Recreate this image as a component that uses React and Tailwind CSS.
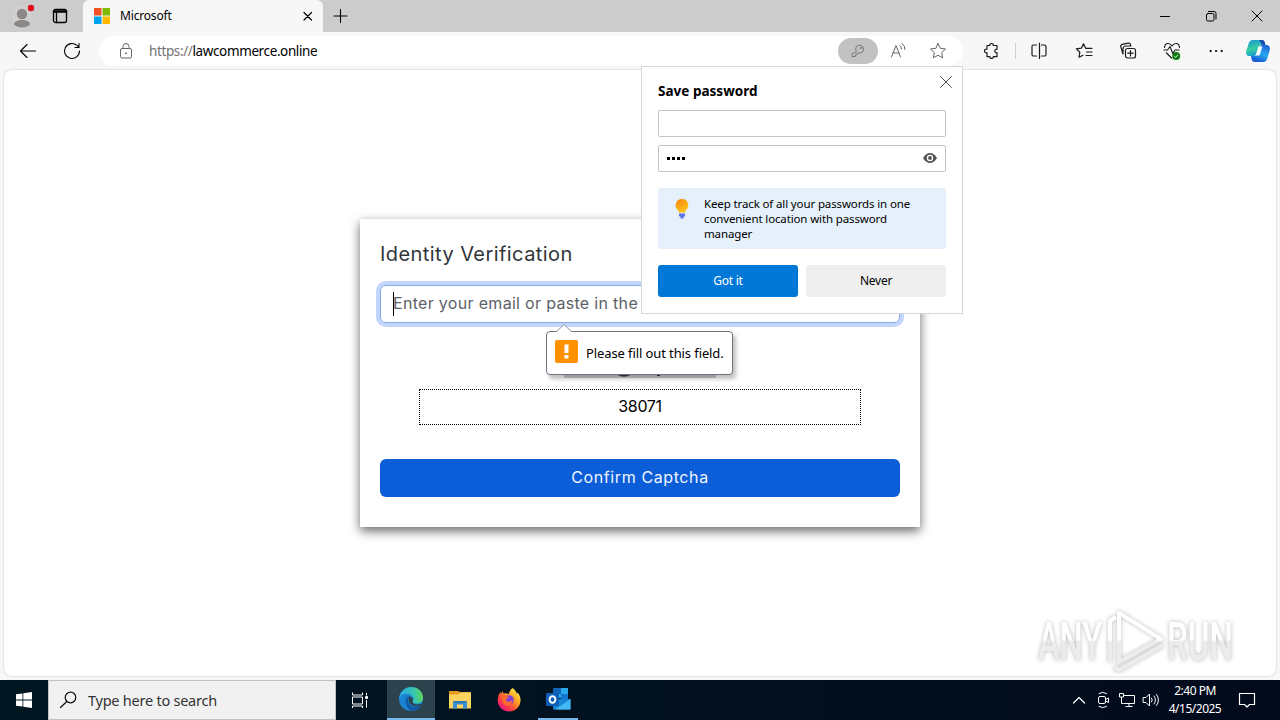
import { useState } from "react"

const Stroke = ({ size = 20, className = "", width = 1, color = "#1b1b1b", children }) => (
  <svg width={size} height={size} viewBox={`0 0 ${size} ${size}`} className={className} fill="none" stroke={color} strokeWidth={width} strokeLinecap="round" strokeLinejoin="round">
    {children}
  </svg>
)

const TabStrip = () => (
  <div className="flex h-8 bg-[#cccccc]">
    <div className="flex w-[83px] items-center pl-3">
      <svg width="24" height="28" viewBox="0 0 24 28">
        <circle cx="10" cy="14" r="10" fill="#d3d1d0" />
        <circle cx="10" cy="12" r="5.2" fill="#8a8886" />
        <path d="M2 22.500c0-3 3.500-4.500 8-4.500s8 1.500 8 4.500c-2 2-5 3-8 3s-6-1-8-3z" fill="#8a8886" />
        <circle cx="19" cy="6" r="3.200" fill="#e00b1c" />
      </svg>
      <Stroke size={16} width={1.3} color="#000" className="ml-4">
        <rect x="1.500" y="1.500" width="13" height="13" rx="2" />
        <path d="M2 3.500h12" strokeWidth="2.500" />
        <path d="M4.500 5v9.500" />
      </Stroke>
    </div>
    <div className="flex w-60 items-center rounded-t-md bg-[#f7f7f7] pr-[8px] pl-[11px]">
      <svg width="16" height="16" viewBox="0 0 16 16">
        <path d="M0 0h7.500v7.500H0z" fill="#f25022" />
        <path d="M8.500 0H16v7.500H8.500z" fill="#7fba00" />
        <path d="M0 8.500h7.500V16H0z" fill="#00a4ef" />
        <path d="M8.500 8.500H16V16H8.500z" fill="#ffb900" />
      </svg>
      <span className="ml-[10px] flex-1 text-[12px] tracking-[-0.17px] text-black">Microsoft</span>
      <Stroke size={14} width={1.2} color="#000">
        <path d="M3 3.500l7.500 7.500M10.500 3.500l-7.500 7.500" />
      </Stroke>
    </div>
    <Stroke size={16} width={1.1} color="#000" className="mt-2 ml-[9px]">
      <path d="M8.500 1.500v13M2 8h13" />
    </Stroke>
    <div className="ml-auto flex items-center">
      <Stroke size={14} color="#000" className="mr-8">
        <path d="M2.500 7.500h9" />
      </Stroke>
      <Stroke size={14} color="#000" className="mr-8">
        <rect x="2.500" y="4.500" width="7.500" height="7.500" rx="1.500" />
        <path d="M4.500 2.500h5.500a2 2 0 0 1 2 2v5.500" />
      </Stroke>
      <Stroke size={14} color="#000" className="mr-4">
        <path d="M2 2l10 10M12 2L2 12" />
      </Stroke>
    </div>
  </div>
)

const CopilotIcon = () => (
  <svg width="26" height="24" viewBox="0 0 26 24">
    <defs>
      <linearGradient id="cpLeft" x1="0" y1="0" x2="0.3" y2="1">
        <stop offset="0" stopColor="#1c90d8" />
        <stop offset="0.6" stopColor="#35d0a0" />
        <stop offset="1" stopColor="#1a9cd0" />
      </linearGradient>
      <linearGradient id="cpRight" x1="0.7" y1="0" x2="0.3" y2="1">
        <stop offset="0" stopColor="#1d63d8" />
        <stop offset="0.500" stopColor="#28a8ee" />
        <stop offset="1" stopColor="#1554d0" />
      </linearGradient>
    </defs>
    <path d="M8 1h8c2 0 3 1 3.500 3l.5 2h-3c-2 0-3 1-3.500 3l-1.500 5c-.7 2-1.500 3-3.500 3H5c-3 0-4.500-2-3.700-5L3.700 4.500C4.500 2 5.800 1 8 1z" fill="url(#cpLeft)" />
    <path d="M14 1h3c2 0 2.500 1 3 3l.5 2H17z" fill="#174db5" />
    <path d="M18 23h-8c-2 0-3-1-3.500-3L6 17h3c2 0 3-1 3.500-3L14 9c.7-2 1.500-3 3.500-3H21c3 0 4.500 2 3.700 5l-2.400 8.500C21.500 22 20.200 23 18 23z" fill="url(#cpRight)" />
    <path d="M13.500 7.500h4l-3 9h-4z" fill="#f4fbff" />
  </svg>
)

const Toolbar = () => (
  <div className="flex h-[38px] items-center bg-[#f7f7f7]">
    <Stroke size={20} width={1.100} className="ml-[18px]" color="#000">
      <path d="M17.500 10H2.500M9 3.500L2.500 10L9 16.500" />
    </Stroke>
    <Stroke size={20} width={1.100} className="ml-6" color="#000">
      <path d="M17.500 10a7.500 7.500 0 1 1-2.500-5.600l1.800 1.800M17 2.500v4h-4" />
    </Stroke>
    <div className="ml-[17px] flex h-[30px] w-[864px] items-center rounded-full bg-white">
      <Stroke size={18} className="ml-[18px]" color="#666">
        <rect x="3.500" y="6.500" width="11" height="9.500" rx="1.500" />
        <path d="M6 6.500V4.500a3 3 0 0 1 6 0v2" />
        <circle cx="9" cy="11.300" r="0.500" fill="#666" />
      </Stroke>
      <span className="ml-[14px] text-[13.500px] tracking-[-0.38px] text-black">
        <span className="text-[#737373]">https://</span>lawcommerce.online
      </span>
      <div className="ml-auto flex items-center pr-4">
        <div className="flex h-[26px] w-10 items-center justify-center rounded-full bg-[#c2c2c2]">
          <Stroke size={16} color="#777">
            <path d="M6.200 8.300A4 4 0 1 1 8.500 10L7 10.300v1.500H5.300v1.700H2v-2.200z" />
            <circle cx="10.800" cy="5" r="0.600" />
          </Stroke>
        </div>
        <Stroke size={18} color="#666" className="ml-3">
          <path d="M1.500 15L6 3.500L10.500 15M3 11h6" />
          <path d="M10 3.500a4 4 0 0 1 1.500 3.500M12 1.500a7 7 0 0 1 3 6" />
        </Stroke>
        <Stroke size={18} color="#666" className="ml-[21px]">
          <path d="M9 1.500l2.300 4.800l5.200.7l-3.800 3.600l1 5.200L9 13.300l-4.700 2.500l1-5.200L1.500 7l5.200-.7z" />
        </Stroke>
      </div>
    </div>
    <Stroke size={18} width={1.200} className="ml-[19px]">
      <path d="M5.500 3.500h2.300c-.4-2.700 3.900-2.700 3.500 0h3.700v3.700c-2.900-.4-2.900 3.900 0 3.500v4h-3.700c.4 2.200-3.900 2.200-3.500 0H5v-4c-3.400.6-3.400-4.200 0-3.600V4z" />
    </Stroke>
    <div className="ml-[15px] h-4 w-px bg-[#cfcfcf]" />
    <Stroke size={18} width={1.200} className="ml-[14px]">
      <path d="M6.500 3H3.500a1.500 1.500 0 0 0-1.500 1.500v8A1.500 1.500 0 0 0 3.500 14h3M11.500 3h3A1.500 1.500 0 0 1 16 4.500v8a1.500 1.500 0 0 1-1.500 1.500h-3M9.500 1v15.500" />
    </Stroke>
    <Stroke size={18} width={1.200} className="ml-[27px]">
      <path d="M8 13.300L4 15.300l.8-5L1.300 6.900l5-.7L8.500 1.800L10.700 6.300H17M11.500 10H17M11 13.500h6" />
    </Stroke>
    <Stroke size={18} width={1.200} className="ml-[26px]">
      <rect x="6.500" y="6.500" width="10" height="9.500" rx="2" />
      <path d="M11.500 8.500v5.500M8.800 11.200h5.400M4 12L1.800 4.800a2 2 0 0 1 1.400-2.500l6-1.200a2 2 0 0 1 2.300 1.500l.4 1.400H7a3 3 0 0 0-3 3z" />
    </Stroke>
    <svg width="20" height="20" viewBox="0 0 20 20" fill="none" className="ml-[25px]">
      <path d="M2.500 7C2.500 4 4 2.500 6 2.500c2 0 3 1 4 2.500c1-1.500 2-2.500 4-2.500c2 0 3.500 1.500 3.500 4.500M4 11.500L10 17.500M1.500 9h4L8 5.500l2.800 7L13 9h4.500" stroke="#1b1b1b" strokeWidth="1.100" strokeLinejoin="round" />
      <circle cx="14.200" cy="15" r="4" fill="#107c10" />
      <path d="M12.300 15.200l1.300 1.200l2.400-2.600" stroke="#fff" strokeWidth="0.900" />
    </svg>
    <Stroke size={16} className="ml-[26px]">
      <circle cx="2.500" cy="8" r="0.700" fill="#1b1b1b" />
      <circle cx="8" cy="8" r="0.700" fill="#1b1b1b" />
      <circle cx="13.500" cy="8" r="0.700" fill="#1b1b1b" />
    </Stroke>
    <div className="ml-[21px]">
      <CopilotIcon />
    </div>
  </div>
)

const SavePassword = () => (
  <div className="absolute top-[66px] left-[641px] z-20 h-[248px] w-[322px] border border-[#d6d6d6] bg-white px-4 pt-[15px] text-black">
    <Stroke size={14} color="#555" className="absolute top-2 right-[9px]">
      <path d="M1.500 1.500l11 11M12.500 1.500l-11 11" />
    </Stroke>
    <h2 className="text-[13.500px] leading-[18px] font-bold tracking-[0.02px]">Save password</h2>
    <div className="mt-[10px] h-[27px] rounded-xs border border-[#c4c4c4]" />
    <div className="mt-2 flex h-[27px] items-center rounded-xs border border-[#c4c4c4] px-2">
      <div className="flex gap-[2px]">
        <i className="size-[3px] bg-black" />
        <i className="size-[3px] bg-black" />
        <i className="size-[3px] bg-black" />
        <i className="size-[3px] bg-black" />
      </div>
      <svg width="14" height="12" viewBox="0 0 14 12" className="-mt-px ml-auto">
        <path d="M0 6C2 2.500 4.500 1 7 1s5 1.500 7 5c-2 3.500-4.500 5-7 5S2 9.500 0 6z" fill="#555" />
        <circle cx="7" cy="6" r="3.200" fill="#fff" />
        <circle cx="7" cy="6" r="1.900" fill="#555" />
      </svg>
    </div>
    <div className="mt-4 flex h-[61px] rounded-xs bg-[#e5f0fa] pt-2 pl-[17px]">
      <svg width="14" height="20" viewBox="0 0 14 20" className="mt-[3px]">
        <defs>
          <linearGradient id="bulb" x1="0" y1="0" x2="0.6" y2="1">
            <stop offset="0" stopColor="#f5800b" />
            <stop offset="1" stopColor="#ffc61a" />
          </linearGradient>
        </defs>
        <path d="M7 0a6.300 6.300 0 0 0-4 11.200l1.200 2.300h5.600L11 11.200A6.300 6.300 0 0 0 7 0z" fill="url(#bulb)" />
        <path d="M4 14.500h6v2.500l-1.500 1v1.500h-3V18L4 17z" fill="#5b74ea" />
      </svg>
      <p className="ml-[15px] w-[222px] text-[11.500px] leading-[15px] tracking-[-0.13px]">
        Keep track of all your passwords in one
        <br />
        convenient location with password
        <br />
        manager
      </p>
    </div>
    <div className="mt-4 flex gap-2 text-[12px] tracking-[-0.25px]">
      <button className="h-8 flex-1 rounded-[3px] bg-[#0078d7] text-white">Got it</button>
      <button className="h-8 flex-1 rounded-[3px] bg-[#efefef]">Never</button>
    </div>
  </div>
)

const FieldTooltip = () => (
  <div className="absolute top-[331px] left-[546px] z-10 flex h-11 w-[187px] items-center rounded border border-[#767080] bg-white pl-2 shadow-[3px_4px_4px_rgba(0,0,0,0.25)]">
    <svg width="18" height="9" viewBox="0 0 18 9" className="absolute -top-2 left-2">
      <path d="M0 9L9 .7L18 9z" fill="#fff" />
      <path d="M1 8L9 .7L17 8" fill="none" stroke="#8a8a98" strokeWidth="0.900" />
    </svg>
    <svg width="23" height="23" viewBox="0 0 23 23" className="-mt-1">
      <rect width="23" height="23" rx="2" fill="#ff9000" />
      <path d="M9.500 4.500h4v8.500h-4zM9.500 15h4v3.500h-4z" fill="#fff" />
    </svg>
    <span className="mt-px ml-2 text-[13px] tracking-[-0.1px] whitespace-nowrap text-black">Please fill out this field.</span>
  </div>
)

const VerifyCard = () => {
  const [email, setEmail] = useState("")

  return (
    <div className="h-[308px] w-[560px] bg-white px-5 pt-5 font-['Inter',sans-serif] shadow-[0_4px_10px_rgba(0,0,0,0.6)]">
      <h1 className="text-[20px] leading-[30px] tracking-[0.43px] text-[#30353a]">Identity Verification</h1>
      <div className="mt-4 flex h-[38px] items-center rounded-md border border-[#86a9f0] pl-3 ring-4 ring-[#c2d5fb]">
        <span className="h-6 w-px bg-black" />
        <input
          value={email}
          onChange={(e) => setEmail(e.target.value)}
          placeholder="Enter your email or paste in the box"
          className="-mt-0.5 -ml-px flex-1 text-[16px] tracking-[0.31px] outline-none placeholder:text-[#5c6166]"
        />
      </div>
      <div className="mx-auto mt-[22px] flex h-[33px] w-[152px] items-end bg-[#cdcad3] pl-[53px]">
        <svg width="50" height="4" viewBox="0 0 50 4">
          <path d="M0 0h14c-2 2-4 2.500-7 2.500S2 2 0 0zM40 0h3v2h-3z" fill="#333" />
        </svg>
      </div>
      <div className="mx-auto mt-[11px] flex h-9 w-[442px] items-center justify-center border border-dotted border-black pb-0.5 text-[16px] tracking-[-0.35px] text-black">
        38071
      </div>
      <button className="mt-[34px] h-[38px] w-full rounded-md bg-[#0b5ed7] pb-0.5 text-[16px] tracking-[0.6px] text-[#eef5ff]">
        Confirm Captcha
      </button>
    </div>
  )
}

const Watermark = () => (
  <svg width="244" height="72" viewBox="0 0 244 72" className="absolute top-[604px] left-[1034px] drop-shadow-[0_0_2px_rgba(0,0,0,0.28)]">
    <defs>
      <linearGradient id="wm" gradientUnits="userSpaceOnUse" x1="0" y1="0" x2="0" y2="72">
        <stop offset="0.500" stopColor="#ffffff" />
        <stop offset="0.520" stopColor="#ececec" />
      </linearGradient>
    </defs>
    <g fill="url(#wm)" fontFamily="Roboto, sans-serif" fontSize="53" fontWeight="500">
      <text x="4" y="56" textLength="64" lengthAdjust="spacingAndGlyphs">ANY</text>
      <text x="133" y="56" textLength="66" lengthAdjust="spacingAndGlyphs">RUN</text>
    </g>
    <g fill="none" stroke="url(#wm)" strokeWidth="4" strokeLinejoin="round">
      <path d="M85 9L127 35L85 58z" />
      <path d="M82 13L76 17V58" />
      <path d="M80 63L85 66L129 41" />
    </g>
  </svg>
)

const EdgeIcon = () => (
  <svg width="24" height="24" viewBox="0 0 24 24">
    <defs>
      <linearGradient id="edgeTop" x1="0" y1="0.500" x2="1" y2="0.400">
        <stop offset="0" stopColor="#2aa7e8" />
        <stop offset="0.600" stopColor="#35c2b4" />
        <stop offset="1" stopColor="#63d957" />
      </linearGradient>
    </defs>
    <circle cx="12" cy="12" r="12" fill="#1b83d4" />
    <path d="M.3 11C1.500 4 6.500 0 12 0c7 0 12 5 12 10.500c0 4-3 6-6.500 6c-3 0-4.500-1-4-2c1.500-2 1.500-6-3.500-7.500C6 6 2 7.500.3 11z" fill="url(#edgeTop)" />
    <path d="M9.500 9C5 11 5.500 20 12 23.900c4.500.1 8-2 10-5.400c-6 2.500-12.500.5-13-4.500c0-2 .3-3.500.5-5z" fill="#135aa8" />
    <path d="M10 9.500c-1.500 4 .5 9 6.500 9.700c2.500.3 4.500-.2 6-.8l1.500-2.400c-4 2.500-10.500 1.500-10.500-1.200c1.300-2 0-5-3.500-5.300z" fill="#2c424c" />
  </svg>
)

const ExplorerIcon = () => (
  <svg width="22" height="20" viewBox="0 0 22 20">
    <path d="M0 1h9l2 1h11v4H0z" fill="#e39a1c" />
    <path d="M0 4.500h9l2-2h11v16H0z" fill="#fcd462" />
    <path d="M4 18.500v-7.500h14v7.500h-4v-4H8v4z" fill="#3a8fd2" />
    <path d="M5.500 11h11l-1 2h-9z" fill="#2d79b8" />
  </svg>
)

const FirefoxIcon = () => (
  <svg width="24" height="24" viewBox="0 0 24 24">
    <defs>
      <linearGradient id="fx" x1="0.9" y1="0.100" x2="0.200" y2="0.900">
        <stop offset="0" stopColor="#fff14a" />
        <stop offset="0.400" stopColor="#ff9a22" />
        <stop offset="0.700" stopColor="#ff4a3c" />
        <stop offset="1" stopColor="#e8167c" />
      </linearGradient>
    </defs>
    <path d="M15.500 0c3 2 4 4.500 4.500 6c.5-.5.3-1.500 0-2c3 3 3.700 6 3.500 9c-.5 6-5 10.500-11.500 10.500S.7 18.500.7 12.500c0-3.500 1-6.500 2.800-8.500l.5 2l1.500-3l1 2.500c2-.5 4 0 5.500.5C12 3.500 13.500 1.500 15.500 0z" fill="url(#fx)" />
    <circle cx="12" cy="12" r="4.800" fill="#8340d8" />
    <path d="M4 8c3-1.500 6-.5 8 1.500c-1.500.5-3 1-3 2.500c0 2 4 2.500 6.500 0c0 4-3 6-6 5.500S4.500 13 4 8z" fill="#ff6a2f" />
  </svg>
)

const OutlookIcon = () => (
  <svg width="25" height="24" viewBox="0 0 25 24">
    <path d="M7 1h15v10H7z" fill="#28a8ea" />
    <path d="M7 1h8v6H7z" fill="#0f64b8" />
    <path d="M15 7h7v6h-7z" fill="#1275cf" />
    <path d="M7 12h17.500v10.500H7z" fill="#1784d6" />
    <path d="M24.500 12v10.500H9z" fill="#42b9f2" />
    <rect y="6" width="13" height="13" rx="1" fill="#0c5fb8" />
    <ellipse cx="6.500" cy="12.500" rx="2.900" ry="3.300" fill="none" stroke="#fff" strokeWidth="1.900" />
  </svg>
)

const Taskbar = () => (
  <div className="flex h-10 items-stretch bg-gradient-to-r from-[#001722] to-[#020a1c]">
    <div className="flex w-12 items-center justify-center">
      <svg width="16" height="16" viewBox="0 0 16 16" fill="#fff">
        <path d="M0 2.300L6.500 1.400V7.600H0zM7.300 1.300L16 0v7.600H7.300zM0 8.400h6.500v6.200L0 13.700zM7.300 8.400H16V16l-8.700-1.300z" />
      </svg>
    </div>
    <div className="flex w-72 items-center border border-[#c2c2c2] bg-[#f1f1f1] pl-[10px]">
      <Stroke size={20} width={1.200} color="#111">
        <circle cx="11.500" cy="7.500" r="5.300" />
        <path d="M7.800 11.500L1.500 17.500" />
      </Stroke>
      <span className="mt-0.5 ml-[9px] text-[14.500px] tracking-[-0.24px] text-[#333]">Type here to search</span>
    </div>
    <div className="flex w-[51px] items-center justify-center">
      <Stroke size={18} color="#fff" className="mr-1">
        <path d="M1.500 1.500v2.500h10V1.500M1.500 6h10v7h-10zM1.500 17v-2h10v2M15.500 2v2.500M15.500 9v7.500" strokeLinecap="butt" />
        <path d="M15 5.500h1.500v2H15z" fill="#fff" />
      </Stroke>
    </div>
    <div className="flex w-12 items-center justify-center border-b-2 border-[#76b9ed] bg-[#2c424c]">
      <EdgeIcon />
    </div>
    <div className="flex w-[50px] items-center justify-center">
      <ExplorerIcon />
    </div>
    <div className="flex w-12 items-center justify-center">
      <FirefoxIcon />
    </div>
    <div className="ml-[5px] flex w-10 items-center justify-center border-b-2 border-[#76b9ed]">
      <OutlookIcon />
    </div>
    <div className="ml-auto flex items-center text-white">
      <Stroke size={14} width={1.200} color="#fff">
        <path d="M1.500 10L7 4.500L12.500 10" />
      </Stroke>
      <Stroke size={18} color="#fff" className="ml-2">
        <rect x="4.500" y="5.500" width="7" height="7" rx="1.500" />
        <path d="M11.500 8.500l3-1.500v4.500l-3-1.500M5 2.500a7 7 0 0 1 7.500 0M5 15.500a7 7 0 0 0 7.500 0" />
      </Stroke>
      <Stroke size={18} color="#fff" className="ml-[6px]">
        <path d="M5.500 4.500h11v8h-11M11 12.500v3M7.500 15.500h7M1.500 2.500h4v3.500h-4zM3.500 6v6.500h2" strokeLinecap="butt" />
      </Stroke>
      <Stroke size={18} color="#fff" className="ml-[6px]">
        <path d="M1.500 6.500h2.500L7.500 3v12L4 11.500H1.500zM9.500 7a3 3 0 0 1 0 4M12 5a6 6 0 0 1 0 8M14.500 3.500a8.500 8.500 0 0 1 0 11" />
      </Stroke>
      <div className="w-[70px] text-center text-[12px] leading-[18px] tracking-[-0.5px]">
        <div>2:40 PM</div>
        <div>4/15/2025</div>
      </div>
      <Stroke size={18} width={1.200} color="#fff" className="mr-6 ml-[8px]">
        <path d="M1.500 2.500h15v11h-5L9 16L6.500 13.500h-5z" />
      </Stroke>
    </div>
  </div>
)

const App = () => {
  return (
    <div className="relative flex h-[720px] w-[1280px] flex-col overflow-hidden bg-[#f7f7f7] font-['Noto_Sans','Open_Sans',sans-serif]">
      <TabStrip />
      <Toolbar />
      <main className="mx-1 mb-1 flex flex-1 items-center justify-center rounded-lg bg-white shadow-[0_0_2px_rgba(0,0,0,0.25)]">
        <VerifyCard />
      </main>
      <Taskbar />
      <Watermark />
      <FieldTooltip />
      <SavePassword />
    </div>
  )
}

export default App
